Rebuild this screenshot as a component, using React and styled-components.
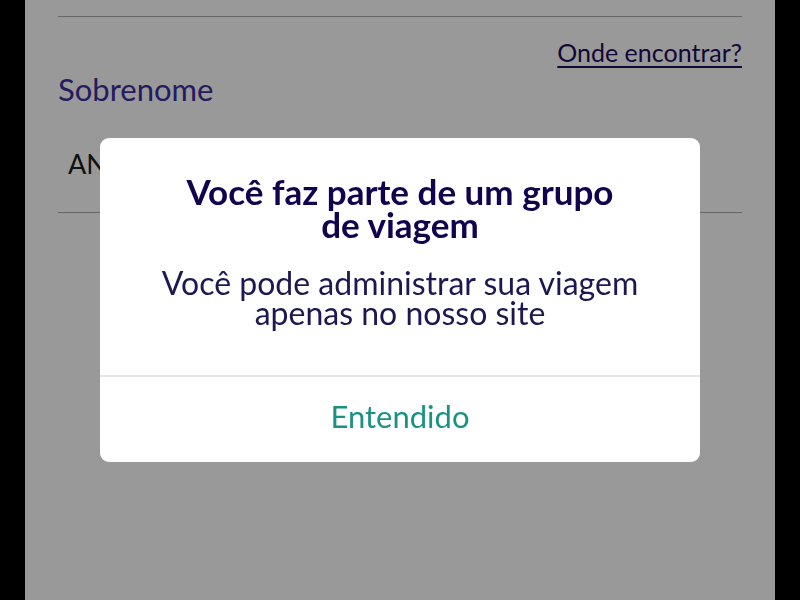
import React from 'react'
import styled, { createGlobalStyle } from 'styled-components'

const GlobalStyle = createGlobalStyle`
  html, body {
    margin: 0;
    padding: 0;
    background: #000;
  }
  body {
    font-family: Lato, "Noto Sans", sans-serif;
  }
`

const Page = styled.div`
  width: 750px;
  height: 600px;
  margin: 0 auto;
  background: #fff;
  padding: 0 33px;
  box-sizing: border-box;
  display: flex;
  flex-direction: column;
  overflow: hidden;
`
const Divider = styled.div`
  height: 1px;
  background: #aaaaaa;
  margin-top: ${props => props.top || 0}px;
`
const LinkRow = styled.div`
  display: flex;
  justify-content: flex-end;
  margin-top: 21px;
`
const HelpLink = styled.a`
  color: #1e0c5c;
  font-size: 25px;
  line-height: 28px;
  text-decoration: underline;
  text-decoration-thickness: 2px;
  text-underline-offset: 4px;
`
const Label = styled.label`
  color: #3b2fa0;
  font-size: 31px;
  line-height: 34px;
  margin-top: 6px;
`
const InputValue = styled.div`
  color: #1c1c1c;
  font-size: 27px;
  line-height: 30px;
  padding-left: 10px;
  margin-top: 43px;
`

const Overlay = styled.div`
  position: fixed;
  inset: 0;
  background: rgba(0, 0, 0, 0.4);
  display: flex;
  align-items: center;
  justify-content: center;
`
const Modal = styled.div`
  width: 600px;
  height: 324px;
  background: #fff;
  border-radius: 9px;
  display: flex;
  flex-direction: column;
  overflow: hidden;
`
const ModalBody = styled.div`
  flex: 1;
  display: flex;
  flex-direction: column;
  align-items: center;
  padding: 37px 40px 0;
  text-align: center;
`
const Title = styled.h2`
  margin: 0;
  color: #12034f;
  font-size: 35px;
  line-height: 33px;
  font-weight: 700;
  max-width: 460px;
`
const Message = styled.p`
  margin: 27px 0 0;
  color: #1d1752;
  font-size: 32px;
  line-height: 30px;
  max-width: 500px;
`
const ModalFooter = styled.div`
  border-top: 2px solid #e4e4e4;
  height: 87px;
  box-sizing: border-box;
  padding-bottom: 8px;
  display: flex;
  align-items: center;
  justify-content: center;
`
const ActionButton = styled.button`
  border: none;
  background: none;
  color: #1a9283;
  font-family: inherit;
  font-size: 31px;
  padding: 0;
  cursor: pointer;
`

const App = () => {
  return (
    <>
      <GlobalStyle />
      <Page>
        <Divider top={16} />
        <LinkRow>
          <HelpLink>Onde encontrar?</HelpLink>
        </LinkRow>
        <Label>Sobrenome</Label>
        <InputValue>ANDRADE</InputValue>
        <Divider top={33} />
      </Page>
      <Overlay>
        <Modal>
          <ModalBody>
            <Title>Você faz parte de um grupo de viagem</Title>
            <Message>Você pode administrar sua viagem apenas no nosso site</Message>
          </ModalBody>
          <ModalFooter>
            <ActionButton>Entendido</ActionButton>
          </ModalFooter>
        </Modal>
      </Overlay>
    </>
  )
}

export default App
